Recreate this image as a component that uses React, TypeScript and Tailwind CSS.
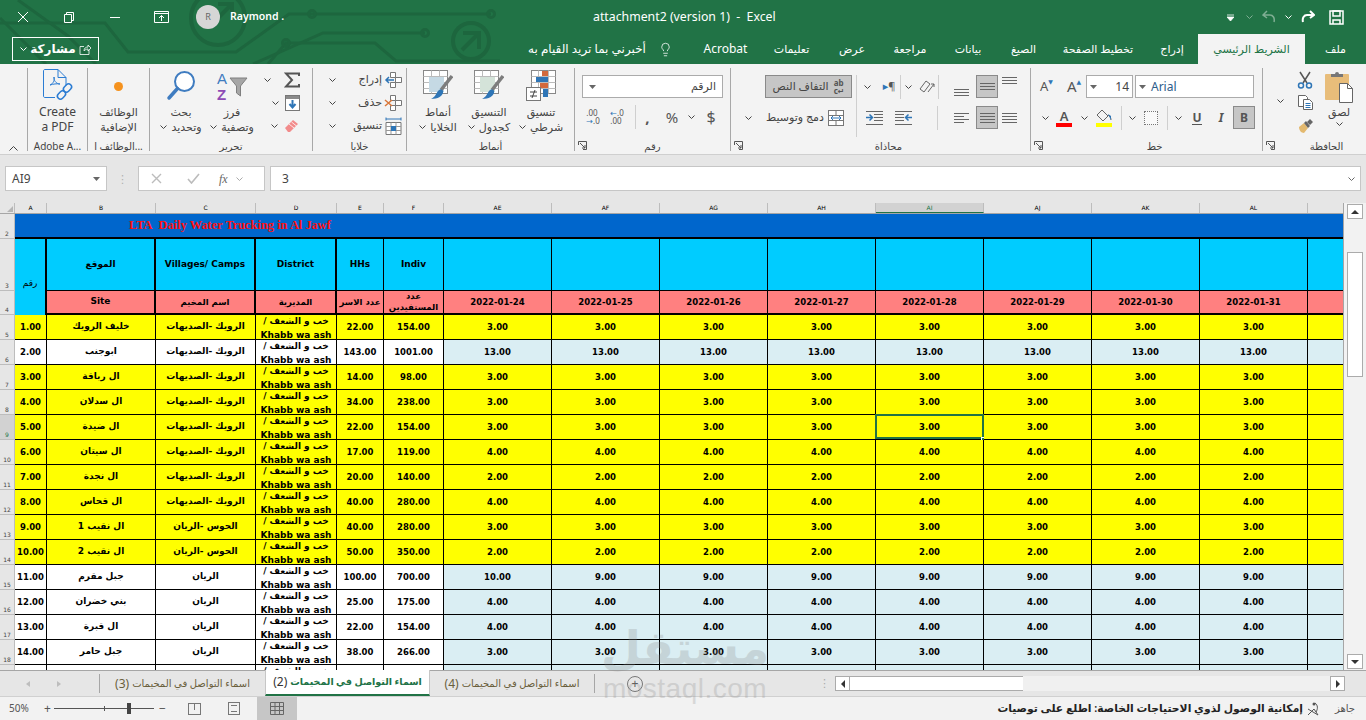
import React from 'react';
import clsx from 'clsx';
import { Lightbulb } from 'lucide-react';

const COLS = 'grid grid-cols-[15px_32px_109px_100px_81px_47px_60px_repeat(8,108px)_36px]';

const Chevron = ({ color = '#444' }: { color?: string }) => (
  <svg width="7" height="4" viewBox="0 0 7 4" className="shrink-0">
    <path d="M.5.5l3 3 3-3" stroke={color} fill="none" />
  </svg>
);

const Caret = () => (
  <svg width="7" height="4" viewBox="0 0 7 4" className="shrink-0">
    <path d="M0 0h7L3.5 4z" fill="#666" />
  </svg>
);

const Launcher = () => (
  <svg width="9" height="9" viewBox="0 0 9 9" className="absolute bottom-[1px] left-[3px]">
    <path d="M.5 4V.5h8v8H5M2 2l5 5M7 4v3H4" stroke="#555" fill="none" />
  </svg>
);

const Slot = ({ w, className, children }: { w: string; className?: string; children?: React.ReactNode }) => (
  <div className={clsx('flex shrink-0 items-center justify-center', w, className)}>{children}</div>
);

const Sep = () => <div className="h-[24px] w-px shrink-0 bg-[#cfcfcf]" />;

function Group({ w, label, launcher, labelClass, children }: { w: string; label: string; launcher?: boolean; labelClass?: string; children?: React.ReactNode }) {
  return (
    <div className={clsx('relative flex shrink-0 flex-col border-l border-[#a8a8a8]', w)}>
      <div className="flex min-h-0 flex-1">{children}</div>
      <div className={clsx('h-[14px] whitespace-nowrap text-center text-[10px] leading-[19px] text-[#444]', labelClass)}>{label}</div>
      {launcher && <Launcher />}
    </div>
  );
}

function BigButton({ w, icon, top, bottom, chevron, latin }: { w: string; icon: React.ReactNode; top: string; bottom: string; chevron?: boolean; latin?: boolean }) {
  const textSize = latin ? 'text-[12px]' : 'text-[11px]';
  return (
    <div className={clsx('flex shrink-0 flex-col items-center', w)}>
      <div className="flex h-[36px] items-center justify-center">{icon}</div>
      <div className={clsx('whitespace-nowrap leading-[15px] text-[#444]', textSize)}>{top}</div>
      <div className={clsx('flex items-center gap-1 whitespace-nowrap leading-[15px] text-[#444]', textSize)}>
        {chevron && <Chevron />}
        <span>{bottom}</span>
      </div>
    </div>
  );
}

const PdfIcon = () => (
  <svg width="32" height="36" viewBox="0 0 32 36" fill="none">
    <path d="M3 1.500h13l8 8v8M3 1.500c-1 0-1.500.5-1.500 1.500v25c0 1 .5 1.500 1.500 1.500h10M16 1.500v8h8" stroke="#2b7cd3" />
    <path d="M8 17c3-1 5-5 4-8-.5 3 2 7 6 7-3-.5-7 0-10 1z" stroke="#2b7cd3" />
    <g stroke="#2b7cd3" strokeWidth="1.500">
      <rect x="15" y="24" width="9" height="6" rx="3" transform="rotate(-45 19.500 27)" />
      <rect x="21" y="17" width="9" height="6" rx="3" transform="rotate(-45 25.500 20)" />
    </g>
  </svg>
);

const Magnifier = () => (
  <svg width="30" height="32" viewBox="0 0 30 32" fill="none">
    <circle cx="18.500" cy="11.500" r="9.500" stroke="#3f7cc0" strokeWidth="2" fill="#fff" />
    <path d="M11.500 18.500L3 28" stroke="#3f7cc0" strokeWidth="3.500" strokeLinecap="round" />
  </svg>
);

const SortFilter = () => (
  <svg width="32" height="32" viewBox="0 0 32 32">
    <text x="1" y="14" fontSize="15" fontFamily="Liberation Sans" fill="#3f7cc0">A</text>
    <text x="1" y="30" fontSize="15" fontFamily="Liberation Sans" fontWeight="700" fill="#8e4bb5">Z</text>
    <path d="M14 8h17l-6.500 8v10l-4-3v-7z" fill="#a6a6a6" stroke="#7f7f7f" />
  </svg>
);

const Sigma = () => (
  <svg width="16" height="16" viewBox="0 0 16 16" fill="none">
    <path d="M15 4V1.500H2L8 8l-6 6.500h13V12" stroke="#555" strokeWidth="2" />
  </svg>
);

const FillDown = () => (
  <svg width="15" height="16" viewBox="0 0 15 16">
    <rect x=".5" y=".5" width="14" height="15" fill="#fff" stroke="#777" />
    <rect x="1" y="1" width="13" height="3" fill="#8a8a8a" />
    <path d="M7.500 5v7M4.500 9l3 3.500 3-3.500" stroke="#2e75b6" strokeWidth="2" fill="none" />
  </svg>
);

const Eraser = () => (
  <svg width="15" height="14" viewBox="0 0 15 14">
    <path d="M1 9l8-8 5 4-8 8H4z" fill="#f28b8b" />
    <path d="M5 5l5 4M7.500 3l5 4" stroke="#fff" strokeWidth=".8" />
  </svg>
);

function CellGridIcon({ mark }: { mark: 'insert' | 'delete' | 'format' }) {
  return (
    <svg width="20" height="18" viewBox="0 0 20 18" fill="none">
      {mark !== 'format' && <path d="M7.500 1.500h5v5h-5zM7.500 11.500h5v5h-5zM12.500 6.500h6v5h-6z" stroke="#777" fill="#fff" />}
      {mark === 'insert' && <path d="M11 9H3M6 6L3 9l3 3" stroke="#2e75b6" strokeWidth="1.500" />}
      {mark === 'delete' && <path d="M2 6l7 6M9 6l-7 6" stroke="#d9773a" strokeWidth="1.500" />}
      {mark === 'format' && (
        <>
          <path d="M3 5.500h15v12H3z" stroke="#777" fill="#fff" />
          <path d="M3 9.500h15M3 13.500h15M8 5.500v12M13 5.500v12" stroke="#999" />
          <rect x="8" y="9" width="5" height="5" fill="#2e75b6" />
          <path d="M3 2h15M3 .5v3M18 .5v3" stroke="#2e75b6" />
        </>
      )}
    </svg>
  );
}

const CondFormat = () => (
  <svg width="30" height="33" viewBox="0 0 30 33">
    <rect x="5.500" y=".5" width="24" height="23" fill="#fff" stroke="#888" />
    <path d="M5.500 6.500h24M5.500 12.500h24M5.500 18.500h24M12.500 .5v23M22.500 .5v23" stroke="#bbb" />
    <rect x="16" y="1" width="6" height="5" fill="#d2693c" />
    <rect x="10" y="7" width="12" height="5" fill="#2e75b6" />
    <rect x="14" y="13" width="8" height="5" fill="#d2693c" />
    <rect x="17" y="19" width="5" height="8" fill="#2e75b6" />
    <rect x=".5" y="17.500" width="14" height="13" fill="#fff" stroke="#777" />
    <path d="M4 22h7M4 26h7M9 20l-3 8" stroke="#444" />
  </svg>
);

function TableBrush({ fill }: { fill: string }) {
  return (
    <svg width="30" height="33" viewBox="0 0 30 33">
      <rect x=".5" y=".5" width="24" height="23" fill="#fff" stroke="#888" />
      <path d="M.5 6.500h24M.5 12.500h24M.5 18.500h24M8.500 .5v23M16.500 .5v23" stroke="#bbb" />
      <rect x="6" y="7" width="15" height="15" fill={fill} />
      <path d="M29 6L18 20" stroke="#7d7d7d" strokeWidth="3.500" />
      <path d="M15 21c3-3 6-1 5 2-1 3-5 6-12 6 4-2 5-5 7-8z" fill="#2e75b6" />
    </svg>
  );
}

function AlignLines({ widths }: { widths: ('long' | 'short')[] }) {
  return (
    <div className="flex w-[15px] flex-col gap-[2px]">
      {widths.map((k, i) => (
        <div key={i} className={clsx('h-px bg-[#666]', k === 'long' ? 'w-[15px]' : 'w-[10px]')} />
      ))}
    </div>
  );
}

const IndentIcon = ({ flip }: { flip?: boolean }) => (
  <svg width="17" height="14" viewBox="0 0 17 14" className={flip ? '-scale-x-100' : ''}>
    <path d="M0 .5h17M8 3.500h9M8 6.500h9M8 9.500h9M0 13.500h17" stroke="#666" />
    <path d="M0 6.500h6M3.500 3.500l3 3-3 3" stroke="#2e75b6" strokeWidth="1.500" fill="none" />
  </svg>
);

const MergeIcon = () => (
  <svg width="16" height="16" viewBox="0 0 16 16">
    <rect x=".5" y=".5" width="15" height="15" fill="#fff" stroke="#777" />
    <path d="M.5 5.500h15M.5 10.500h15M8 .5v5M8 10.500v5" stroke="#777" />
    <path d="M3 8h10M5 6L3 8l2 2M11 6l2 2-2 2" stroke="#2e75b6" fill="none" />
  </svg>
);

const Scissors = () => (
  <svg width="16" height="18" viewBox="0 0 16 18" fill="none">
    <path d="M3 1l7 11M13 1L6 12" stroke="#555" strokeWidth="1.500" />
    <circle cx="4" cy="14.500" r="2.500" stroke="#2e75b6" strokeWidth="1.500" />
    <circle cx="12" cy="14.500" r="2.500" stroke="#2e75b6" strokeWidth="1.500" />
  </svg>
);

const CopyIcon = () => (
  <svg width="15" height="15" viewBox="0 0 15 15">
    <path d="M.5.5h7l2 2v9H.5z" fill="#fff" stroke="#666" />
    <path d="M5.500 4.500h6l3 3v7h-9z" fill="#fff" stroke="#666" />
    <path d="M7.500 8.500h5M7.500 10.500h5M7.500 12.500h5" stroke="#2e75b6" />
  </svg>
);

const Painter = () => (
  <svg width="15" height="14" viewBox="0 0 15 14">
    <path d="M1 8l5-4 4 5-4 5c-3 0-5-3-5-6z" fill="#e3b96f" />
    <path d="M6 4l4 5 2-2-4-5zM9 3l3-3 3 3-3 3z" fill="#666" />
  </svg>
);

const PasteIcon = () => (
  <svg width="28" height="32" viewBox="0 0 28 32">
    <rect x="0" y="3" width="24" height="26" rx="1" fill="#e8bd7a" />
    <path d="M6 6V3h4a2 2 0 014 0h4v3z" fill="#777" />
    <path d="M14.500 12.500h8l5 5v14h-13z" fill="#fff" stroke="#666" />
    <path d="M22.500 12.500v5h5" fill="none" stroke="#666" />
  </svg>
);

const CircuitBackdrop = () => (
  <svg width="560" height="64" viewBox="0 0 560 64" className="pointer-events-none absolute left-0 top-0" fill="none" stroke="#1d663e" strokeWidth="3">
    <path d="M0 23h105l23 29h108l53-38h202" />
    <path d="M253 64l70-31h102" />
    <path d="M268 64l18-21h89l21 18h104" />
    <path d="M18 0l50 36 28 28M0 18l46 46" />
    <circle cx="312" cy="14" r="3.500" />
    <circle cx="491" cy="14" r="3.500" />
    <circle cx="425" cy="33" r="3.500" />
    <circle cx="286" cy="43" r="3.500" />
    <circle cx="218" cy="18" r="27" strokeWidth="4" />
    <path d="M218 4h14v14M232 4l-22 22" strokeWidth="4" />
    <circle cx="471" cy="41" r="18" strokeWidth="4" />
    <path d="M463 33h16v16M479 33l-17 17" strokeWidth="4" />
  </svg>
);

function TitleBar() {
  return (
    <div className="relative flex h-[34px] items-center text-white">
      <Slot w="w-[46px]">
        <svg width="12" height="12" viewBox="0 0 12 12"><path d="M1 1l10 10M11 1L1 11" stroke="#fff" /></svg>
      </Slot>
      <Slot w="w-[46px]">
        <svg width="10" height="11" viewBox="0 0 10 11" fill="none"><path d="M2.500 2.500V.5h7v8H7.500M.5 2.500h7v8h-7z" stroke="#fff" /></svg>
      </Slot>
      <Slot w="w-[46px]"><div className="h-px w-[10px] bg-white" /></Slot>
      <Slot w="w-[46px]">
        <svg width="15" height="12" viewBox="0 0 15 12" fill="none"><path d="M.5.5h14v11H.5zM.5 2.500h14M7.500 10V4.500M5 7l2.500-2.500L10 7" stroke="#fff" /></svg>
      </Slot>
      <div className="z-10 ml-[12px] flex h-[24px] w-[24px] items-center justify-center rounded-full bg-[#d6d6d6] text-[9px] text-[#666]">R</div>
      <span className="z-10 ml-[10px] text-[10.5px] font-semibold">Raymond .</span>
      <span className="absolute left-[593px] whitespace-pre text-[12.3px]">attachment2 (version 1)  -  Excel</span>
      <div className="ml-auto flex items-center pr-[22px]">
        <svg width="7" height="7" viewBox="0 0 7 7" className="mr-[12px]"><path d="M0 1h7M0 3h7L3.500 7z" stroke="#fff" strokeWidth=".8" fill="#fff" /></svg>
        <div className="mr-[9px]"><Chevron color="#7fae93" /></div>
        <svg width="14" height="14" viewBox="0 0 14 14" fill="none" className="mr-[9px]"><path d="M5 1L1 5l4 3M1 5h7c3 0 5 3 4 7" stroke="#7fae93" strokeWidth="1.500" /></svg>
        <div className="mr-[9px]"><Chevron color="#fff" /></div>
        <svg width="14" height="14" viewBox="0 0 14 14" fill="none" className="mr-[14px]"><path d="M9 1l4 4-4 3M13 5H6C3 5 1 8 2 12" stroke="#fff" strokeWidth="2" /></svg>
        <svg width="15" height="15" viewBox="0 0 15 15" fill="none"><path d="M1 1h13v13H1z" stroke="#fff" strokeWidth="1.500" /><path d="M4 1h7v5H4zM4 14v-4h7v4" stroke="#fff" strokeWidth="1.500" /></svg>
      </div>
    </div>
  );
}

const TABS: { label: string; w: string; active?: boolean }[] = [
  { label: 'Acrobat', w: 'w-[69px] text-[12px]' },
  { label: 'تعليمات', w: 'w-[63px] text-[11px]' },
  { label: 'عرض', w: 'w-[58px] text-[11px]' },
  { label: 'مراجعة', w: 'w-[58px] text-[11px]' },
  { label: 'بيانات', w: 'w-[58px] text-[11px]' },
  { label: 'الصيغ', w: 'w-[53px] text-[11px]' },
  { label: 'تخطيط الصفحة', w: 'w-[96px] text-[11px]' },
  { label: 'إدراج', w: 'w-[52px] text-[11px]' },
  { label: 'الشريط الرئيسي', w: 'w-[107px] text-[11px]', active: true },
  { label: 'ملف', w: 'w-[61px] text-[11px]' },
];

function TabRow() {
  return (
    <div className="relative flex h-[30px] items-stretch text-white">
      <div className="z-10 mb-[3px] ml-[12px] mt-[3px] flex w-[87px] items-center justify-center gap-[3px] border border-white">
        <Chevron color="#fff" />
        <span className="text-[12px] font-bold leading-none">مشاركة</span>
        <svg width="12" height="12" viewBox="0 0 12 12" fill="none"><path d="M5 3.500H1v8h9V7M5 8c0-3 2-4 4-4V2l3 3-3 3V6c-2 0-3 1-4 2z" stroke="#fff" strokeWidth=".8" /></svg>
      </div>
      <div className="ml-[429px] flex w-[150px] items-center gap-[12px]">
        <span className="whitespace-nowrap text-[12px]">أخبرني بما تريد القيام به</span>
        <Lightbulb size={15} strokeWidth={1.25} className="shrink-0" />
      </div>
      <div className="ml-auto flex items-stretch">
        {TABS.map((t) => (
          <div
            key={t.label}
            className={clsx(
              'flex shrink-0 items-center justify-center whitespace-nowrap',
              t.w,
              t.active && 'bg-[#f3f3f3] text-[#217346]'
            )}
          >
            {t.label}
          </div>
        ))}
      </div>
    </div>
  );
}

function Ribbon() {
  return (
    <div className="flex h-[91px] items-stretch border-b border-[#cfcfcf] bg-[#f3f3f3] pb-[3px] pt-[4px]">
      <div className="flex w-[27px] shrink-0 items-end justify-center">
        <svg width="9" height="5" viewBox="0 0 9 5"><path d="M.5 4.500l4-4 4 4" stroke="#444" fill="none" /></svg>
      </div>

      <Group w="w-[60px]" label="Adobe A...">
        <BigButton w="w-full" icon={<PdfIcon />} top="Create" bottom="a PDF" latin />
      </Group>

      <Group w="w-[62px]" label="الوظائف ا...">
        <BigButton w="w-full" icon={<div className="h-[9px] w-[9px] rounded-full bg-[#f5921e]" />} top="الوظائف" bottom="الإضافية" />
      </Group>

      <Group w="w-[163px]" label="تحرير">
        <BigButton w="w-[62px]" icon={<Magnifier />} top="بحث" bottom="وتحديد" chevron />
        <BigButton w="w-[40px]" icon={<SortFilter />} top="فرز" bottom="وتصفية" chevron />
        <div className="flex flex-1 flex-col pr-[12px]">
          <div className="flex h-[23px] items-center justify-end gap-[13px]"><Chevron /><Sigma /></div>
          <div className="flex h-[23px] items-center justify-end gap-[6px]"><Chevron /><FillDown /></div>
          <div className="flex h-[23px] items-center justify-end gap-[6px] pr-[1px]"><Chevron /><Eraser /></div>
        </div>
      </Group>

      <Group w="w-[94px]" label="خلايا">
        <div className="flex w-full flex-col pl-[16px] pr-[3px] text-[11px] text-[#444]">
          <div className="flex h-[23px] items-center justify-between"><Chevron /><div className="flex items-center gap-[1px]"><span>إدراج</span><CellGridIcon mark="insert" /></div></div>
          <div className="flex h-[23px] items-center justify-between"><Chevron /><div className="flex items-center gap-[1px]"><span>حذف</span><CellGridIcon mark="delete" /></div></div>
          <div className="flex h-[23px] items-center justify-between"><Chevron /><div className="flex items-center gap-[1px]"><span>تنسيق</span><CellGridIcon mark="format" /></div></div>
        </div>
      </Group>

      <Group w="w-[168px]" label="أنماط">
        <div className="flex pl-[2px]">
          <BigButton w="w-[58px]" icon={<TableBrush fill="#c5d9e4" />} top="أنماط" bottom="الخلايا" chevron />
          <BigButton w="w-[44px]" icon={<TableBrush fill="#d4e3d9" />} top="التنسيق" bottom="كجدول" chevron />
          <BigButton w="w-[60px]" icon={<CondFormat />} top="تنسيق" bottom="شرطي" chevron />
        </div>
      </Group>

      <Group w="w-[156px]" label="رقم" launcher>
        <div className="flex w-full flex-col pl-[7px] pr-[7px] pt-[7px]">
          <div className="flex h-[23px] items-center justify-between border border-[#ababab] bg-white px-[6px]">
            <Caret />
            <span className="text-[11px] text-[#444]">الرقم</span>
          </div>
          <div className="mt-[7px] flex h-[24px] items-center text-[#555]">
            <Slot w="w-[22px]"><span className="text-[8px] leading-[8px] text-[#555]">.00<br /><span className="text-[#2e75b6]">→</span>.0</span></Slot>
            <Slot w="w-[26px]"><span className="text-[8px] leading-[8px] text-[#555]"><span className="text-[#2e75b6]">←</span>.0<br />.00</span></Slot>
            <Slot w="w-[10px]"><Sep /></Slot>
            <Slot w="w-[15px]"><span className="text-[15px] font-bold leading-none">,</span></Slot>
            <Slot w="w-[34px]"><span className="text-[15px]">%</span></Slot>
            <Slot w="w-[4px]"><Chevron /></Slot>
            <Slot w="w-[36px]"><span className="text-[16px]">$</span></Slot>
          </div>
        </div>
      </Group>

      <Group w="w-[300px]" label="محاذاة" launcher labelClass="pl-[16px]">
        <div className="flex w-full pt-[7px]">
          <div className="flex w-[126px] shrink-0 flex-col border-r border-[#cfcfcf] pb-[7px] pl-[14px]">
            <div className="ml-[20px] flex h-[23px] w-[87px] items-center justify-center gap-[5px] border border-[#8a8a8a] bg-[#c6c6c6] text-[11px] text-[#444]">
              <span>التفاف النص</span>
              <span className="text-[8px] font-bold leading-[8px] text-[#555]">ab<br />c↵</span>
            </div>
            <div className="mt-[8px] flex h-[23px] items-center gap-[14px] text-[11px] text-[#444]">
              <Chevron />
              <div className="flex items-center gap-[4px]"><span>دمج وتوسيط</span><MergeIcon /></div>
            </div>
          </div>
          <div className="flex w-[90px] shrink-0 flex-col">
            <div className="flex h-[23px] items-center">
              <Slot w="w-[21px]"><Chevron /></Slot>
              <Slot w="w-[22px]"><span className="text-[11px] text-[#555]"><span className="text-[#2e75b6]">▸</span>¶</span></Slot>
              <Sep />
              <Slot w="w-[15px]"><Chevron /></Slot>
              <Slot w="w-[22px]">
                <svg width="16" height="14" viewBox="0 0 16 14" fill="none"><path d="M1 9l6-8 4 3-6 8zM9 12l6-8M15 4h-3M15 4v3" stroke="#666" /></svg>
              </Slot>
              <Sep />
            </div>
            <div className="mt-[8px] flex h-[23px] items-center">
              <Slot w="w-[34px]"><IndentIcon /></Slot>
              <Slot w="w-[25px]"><IndentIcon flip /></Slot>
              <Slot w="w-[21px]" />
              <Sep />
            </div>
          </div>
          <div className="flex flex-col">
            <div className="flex h-[23px] items-center">
              <Slot w="w-[29px]" className="h-full items-end pb-[2px]"><AlignLines widths={['long', 'long', 'long']} /></Slot>
              <Slot w="w-[22px]" className="h-full border border-[#8a8a8a] bg-[#c6c6c6]"><AlignLines widths={['long', 'long', 'long']} /></Slot>
              <Slot w="w-[22px]" className="h-full items-start pt-[2px]"><AlignLines widths={['long', 'long', 'long']} /></Slot>
            </div>
            <div className="mt-[8px] flex h-[23px] items-center">
              <Slot w="w-[29px]"><AlignLines widths={['long', 'short', 'long', 'short']} /></Slot>
              <Slot w="w-[22px]" className="h-full border border-[#8a8a8a] bg-[#c6c6c6]"><AlignLines widths={['long', 'long', 'long', 'long']} /></Slot>
              <Slot w="w-[22px]"><AlignLines widths={['long', 'long', 'long', 'long']} /></Slot>
            </div>
          </div>
        </div>
      </Group>

      <Group w="w-[232px]" label="خط" launcher labelClass="pl-[16px]">
        <div className="flex w-full flex-col pt-[7px]">
          <div className="flex h-[23px] items-center">
            <Slot w="w-[31px]" className="text-[13px] text-[#555]">A<span className="mb-[8px] text-[6px] text-[#2e75b6]">▼</span></Slot>
            <Slot w="w-[24px]" className="text-[15px] text-[#555]">A<span className="mb-[8px] text-[6px] text-[#2e75b6]">▲</span></Slot>
            <div className="flex h-full w-[47px] items-center justify-between border border-[#ababab] bg-white px-[3px]">
              <Caret />
              <span className="text-[12px] text-[#444]">14</span>
            </div>
            <div className="ml-[2px] flex h-full w-[119px] items-center gap-[5px] border border-[#ababab] bg-white px-[3px]">
              <Caret />
              <span className="text-[12px] text-[#2e5d8a]">Arial</span>
            </div>
          </div>
          <div className="mt-[8px] flex h-[23px] items-center text-[#555]">
            <Slot w="w-[12px]" className="ml-[8px]"><Chevron /></Slot>
            <Slot w="w-[26px]" className="flex-col"><span className="text-[13px] font-semibold leading-[14px]">A</span><div className="h-[4px] w-[16px] bg-[#ff0000]" /></Slot>
            <Slot w="w-[14px]"><Chevron /></Slot>
            <Slot w="w-[26px]" className="flex-col">
              <svg width="16" height="14" viewBox="0 0 16 14" fill="none"><path d="M6 1l6 6-5 5-6-6zM12 6c2 1 3 3 3 5" stroke="#666" /><path d="M12 5l3 2v4z" fill="#2e75b6" /></svg>
              <div className="h-[4px] w-[16px] bg-[#ffff00]" />
            </Slot>
            <Slot w="w-[8px]"><Sep /></Slot>
            <Slot w="w-[14px]"><Chevron /></Slot>
            <Slot w="w-[24px]"><div className="h-[14px] w-[14px] border border-dotted border-[#777] bg-[#f9f9f9]" /></Slot>
            <Slot w="w-[8px]"><Sep /></Slot>
            <Slot w="w-[14px]"><Chevron /></Slot>
            <Slot w="w-[24px]"><span className="border-b border-[#555] text-[12px] font-bold leading-[13px]">U</span></Slot>
            <Slot w="w-[24px]"><span className="text-[12px] font-bold italic">I</span></Slot>
            <Slot w="w-[22px]" className="h-full border border-[#8a8a8a] bg-[#c6c6c6]"><span className="text-[12px] font-bold">B</span></Slot>
          </div>
        </div>
      </Group>

      <Group w="w-[104px]" label="الحافظة" launcher labelClass="pl-[24px]">
        <div className="flex w-full">
          <div className="flex h-full w-[33px] items-center justify-end pb-[4px] pr-[12px]"><Chevron /></div>
          <div className="flex w-[18px] flex-col items-center">
            <Slot w="w-full" className="h-[23px]"><Scissors /></Slot>
            <Slot w="w-full" className="h-[23px]"><CopyIcon /></Slot>
            <Slot w="w-full" className="h-[23px]"><Painter /></Slot>
          </div>
          <div className="ml-[11px] flex flex-col items-center pt-[3px]">
            <PasteIcon />
            <span className="mt-[1px] text-[11px] leading-[15px] text-[#444]">لصق</span>
            <div className="mt-[3px]"><Chevron /></div>
          </div>
        </div>
      </Group>
    </div>
  );
}

function FormulaBar() {
  return (
    <div className="flex h-[48px] items-start bg-[#e6e6e6] pt-[11px]">
      <div className="ml-[5px] flex h-[25px] w-[102px] items-center justify-between border border-[#c6c6c6] bg-white px-[6px]">
        <span className="text-[12px] text-[#444]">AI9</span>
        <Caret />
      </div>
      <div className="flex h-[25px] w-[31px] items-center justify-center text-[11px] leading-none text-[#b0b0b0]">⋮</div>
      <div className="flex h-[25px] w-[127px] items-center border border-[#c6c6c6] bg-white pl-[12px] text-[#c0c0c0]">
        <svg width="11" height="11" viewBox="0 0 11 11"><path d="M1 1l9 9M10 1l-9 9" stroke="#bcbcbc" strokeWidth="1.400" /></svg>
        <svg width="13" height="11" viewBox="0 0 13 11" className="ml-[25px]"><path d="M1 6l3.500 4L12 1" stroke="#bcbcbc" strokeWidth="1.600" fill="none" /></svg>
        <span className="ml-[19px] font-['Liberation_Serif',serif] text-[12px] italic text-[#666]">fx</span>
        <div className="ml-[8px]"><Chevron color="#aaa" /></div>
      </div>
      <div className="ml-[5px] flex h-[25px] flex-1 items-center justify-between border border-[#c6c6c6] bg-white pl-[11px] pr-[5px]">
        <span className="text-[12px] text-[#444]">3</span>
        <Chevron color="#666" />
      </div>
      <div className="w-[5px] shrink-0" />
    </div>
  );
}

const COL_HEADERS = ['A', 'B', 'C', 'D', 'E', 'F', 'AE', 'AF', 'AG', 'AH', 'AI', 'AJ', 'AK', 'AL', ''];
const DATES = ['2022-01-24', '2022-01-25', '2022-01-26', '2022-01-27', '2022-01-28', '2022-01-29', '2022-01-30', '2022-01-31'];

type DataRow = { row: number; no: string; site: string; camp: string; hh: string; ind: string; vals: string[]; yellow: boolean };

const repeat8 = (v: string) => Array(8).fill(v) as string[];
const ROWAIK = 'الرويك -الصديهات';
const HAWS = 'الحوس -الريان';
const RAYAN = 'الريان';

const ROWS: DataRow[] = [
  { row: 5, no: '1.00', site: 'خليف الرويك', camp: ROWAIK, hh: '22.00', ind: '154.00', vals: repeat8('3.00'), yellow: true },
  { row: 6, no: '2.00', site: 'ابوجنب', camp: ROWAIK, hh: '143.00', ind: '1001.00', vals: repeat8('13.00'), yellow: false },
  { row: 7, no: '3.00', site: 'ال رباقة', camp: ROWAIK, hh: '14.00', ind: '98.00', vals: repeat8('3.00'), yellow: true },
  { row: 8, no: '4.00', site: 'ال سدلان', camp: ROWAIK, hh: '34.00', ind: '238.00', vals: repeat8('3.00'), yellow: true },
  { row: 9, no: '5.00', site: 'ال ضيدة', camp: ROWAIK, hh: '22.00', ind: '154.00', vals: repeat8('3.00'), yellow: true },
  { row: 10, no: '6.00', site: 'ال سيتان', camp: ROWAIK, hh: '17.00', ind: '119.00', vals: repeat8('4.00'), yellow: true },
  { row: 11, no: '7.00', site: 'ال نجدة', camp: ROWAIK, hh: '20.00', ind: '140.00', vals: repeat8('2.00'), yellow: true },
  { row: 12, no: '8.00', site: 'ال قحاس', camp: ROWAIK, hh: '40.00', ind: '280.00', vals: repeat8('4.00'), yellow: true },
  { row: 13, no: '9.00', site: 'ال نقيب 1', camp: HAWS, hh: '40.00', ind: '280.00', vals: repeat8('3.00'), yellow: true },
  { row: 14, no: '10.00', site: 'ال نقيب 2', camp: HAWS, hh: '50.00', ind: '350.00', vals: repeat8('2.00'), yellow: true },
  { row: 15, no: '11.00', site: 'جبل مقرم', camp: RAYAN, hh: '100.00', ind: '700.00', vals: ['10.00', ...Array(7).fill('9.00')], yellow: false },
  { row: 16, no: '12.00', site: 'بني خضران', camp: RAYAN, hh: '25.00', ind: '175.00', vals: repeat8('4.00'), yellow: false },
  { row: 17, no: '13.00', site: 'ال قبرة', camp: RAYAN, hh: '22.00', ind: '154.00', vals: repeat8('4.00'), yellow: false },
  { row: 18, no: '14.00', site: 'جبل حامر', camp: RAYAN, hh: '38.00', ind: '266.00', vals: repeat8('3.00'), yellow: false },
];

function RowHead({ n, active }: { n: number; active?: boolean }) {
  return (
    <div
      className={clsx(
        'flex items-end justify-center border-b border-r border-[#bdbdbd] pb-[1px] text-[6px] font-normal leading-none',
        active ? 'bg-[#d2d2d2] text-[#217346]' : 'bg-[#e6e6e6] text-[#444]'
      )}
    >
      {n}
    </div>
  );
}

const cellBase = 'flex items-center justify-center overflow-hidden whitespace-nowrap border-b border-r border-black text-center';

function DataRowView({ data }: { data: DataRow }) {
  const bg = data.yellow ? 'bg-[#ffff00]' : 'bg-white';
  const valBg = data.yellow ? 'bg-[#ffff00]' : 'bg-[#daeef3]';
  return (
    <div className={clsx(COLS, 'h-[25px]')}>
      <RowHead n={data.row} active={data.row === 9} />
      <div className={clsx(cellBase, bg)}>{data.no}</div>
      <div className={clsx(cellBase, bg, 'text-[9px]')}>{data.site}</div>
      <div className={clsx(cellBase, bg, 'text-[9px]')}>{data.camp}</div>
      <div className={clsx(cellBase, bg, 'flex-col pt-[2px] text-[9px] leading-[14px]')}>
        <span dir="rtl">خب و الشعف /</span>
        <span>Khabb wa ash</span>
      </div>
      <div className={clsx(cellBase, bg)}>{data.hh}</div>
      <div className={clsx(cellBase, bg)}>{data.ind}</div>
      {data.vals.map((v, i) => (
        <div key={i} className={clsx(cellBase, valBg, 'relative !overflow-visible')}>
          {v}
          {data.row === 9 && i === 4 && (
            <>
              <div className="absolute -left-px -top-px h-[25px] w-[109px] border-2 border-[#217346]" />
              <div className="absolute -bottom-[3px] -right-[3px] h-[5px] w-[5px] border border-white bg-[#217346]" />
            </>
          )}
        </div>
      ))}
      <div className={clsx(cellBase, valBg)} />
    </div>
  );
}

function Sheet() {
  return (
    <div className="flex h-[467px] bg-[#f2f2f2]">
      <div className="w-[1344px] shrink-0 overflow-hidden border-r border-[#a6a6a6] font-['DejaVu_Sans',sans-serif] text-[8.5px] font-bold text-black">
        <div className={clsx(COLS, 'h-[11px] border-b border-[#a6a6a6] bg-[#e6e6e6] font-normal')}>
          <div className="flex items-end justify-end border-r border-[#bdbdbd] pb-[1px] pr-[1px]">
            <div className="h-0 w-0 border-b-[6px] border-l-[6px] border-b-[#b5b5b5] border-l-transparent" />
          </div>
          {COL_HEADERS.map((c, i) => (
            <div
              key={i}
              className={clsx(
                'flex items-center justify-center border-r border-[#bdbdbd] text-[6px] leading-none',
                c === 'AI' && 'border-b border-b-[#217346] bg-[#d2d2d2] text-[#217346]'
              )}
            >
              {c}
            </div>
          ))}
        </div>

        <div className={clsx(COLS, 'h-[25px]')}>
          <RowHead n={2} />
          <div className="col-start-2 col-end-[-1] flex items-center border-b-2 border-black bg-[#0066cc] pl-[114px] font-['Liberation_Serif',serif] text-[12.4px] text-[#ff1010]">
            LTA&nbsp; Daily Water Trucking in Al Jawf
          </div>
        </div>

        <div className={clsx(COLS, 'grid-rows-[52px_24px]')}>
          <RowHead n={3} />
          <div className="row-span-2 flex items-center justify-center border-r-2 border-black bg-[#00ccff] pt-[14px] text-[9px] font-normal">رقم</div>
          <div className={clsx(cellBase, 'border-r-2 bg-[#00ccff] text-[9px]')}>الموقع</div>
          <div className={clsx(cellBase, 'border-r-2 bg-[#00ccff] text-[9px]')}>Villages/ Camps</div>
          <div className={clsx(cellBase, 'border-r-2 bg-[#00ccff] text-[9px]')}>District</div>
          <div className={clsx(cellBase, 'bg-[#00ccff] text-[9px]')}>HHs</div>
          <div className={clsx(cellBase, 'bg-[#00ccff] text-[9px]')}>Indiv</div>
          {DATES.map((d) => (
            <div key={d} className={clsx(cellBase, 'bg-[#00ccff]')} />
          ))}
          <div className={clsx(cellBase, 'bg-[#00ccff]')} />

          <RowHead n={4} />
          <div className={clsx(cellBase, 'border-b-2 border-r-2 bg-[#ff8080] text-[9px]')}>Site</div>
          <div className={clsx(cellBase, 'border-b-2 border-r-2 bg-[#ff8080]')}>اسم المخيم</div>
          <div className={clsx(cellBase, 'border-b-2 border-r-2 bg-[#ff8080]')}>المديرية</div>
          <div className={clsx(cellBase, 'border-b-2 bg-[#ff8080]')}>عدد الاسر</div>
          <div className={clsx(cellBase, 'flex-col border-b-2 bg-[#ff8080] leading-[11px]')}>
            <span>عدد</span>
            <span>المستفيدين</span>
          </div>
          {DATES.map((d) => (
            <div key={d} className={clsx(cellBase, 'border-b-2 bg-[#ff8080]')}>{d}</div>
          ))}
          <div className={clsx(cellBase, 'border-b-2 bg-[#ff8080]')} />
        </div>

        {ROWS.map((r) => (
          <DataRowView key={r.row} data={r} />
        ))}
        <DataRowView data={{ row: 19, no: '', site: '', camp: '', hh: '', ind: '', vals: repeat8(''), yellow: false }} />
      </div>

      <div className="flex flex-1 flex-col items-center py-[1px]">
        <div className="flex h-[15px] w-[16px] items-center justify-center border border-[#ababab] bg-white">
          <div className="h-0 w-0 border-x-[4px] border-b-[4px] border-x-transparent border-b-[#333]" />
        </div>
        <div className="mt-[33px] h-[125px] w-[16px] border border-[#ababab] bg-white" />
        <div className="flex-1" />
        <div className="flex h-[15px] w-[16px] items-center justify-center border border-[#ababab] bg-white">
          <div className="h-0 w-0 border-x-[4px] border-t-[4px] border-x-transparent border-t-[#333]" />
        </div>
      </div>
    </div>
  );
}

function SheetTab({ name, num, w, active }: { name: string; num: string; w: string; active?: boolean }) {
  return (
    <div
      dir="rtl"
      className={clsx(
        'flex shrink-0 items-center justify-center gap-[3px] whitespace-nowrap',
        w,
        active
          ? '-mt-px border-x border-b-2 border-[#217346] border-x-[#c6c6c6] bg-white text-[9.5px] font-bold text-[#217346]'
          : 'text-[10px] text-[#6a5f3c]'
      )}
    >
      <span>{name}</span>
      <span className={clsx('text-[12px]', active && 'font-normal text-[#333]')}>{num}</span>
    </div>
  );
}

function SheetTabs() {
  return (
    <div className="flex h-[26px] items-stretch border-t border-[#a6a6a6] bg-[#e6e6e6]">
      <div className="my-[3px] flex w-[100px] shrink-0 items-center border-r border-[#a6a6a6] pl-[26px] text-[#b5b5b5]">
        <div className="h-0 w-0 border-y-[3px] border-r-[4px] border-y-transparent border-r-[#bdbdbd]" />
        <div className="ml-[27px] h-0 w-0 border-y-[3px] border-l-[4px] border-y-transparent border-l-[#bdbdbd]" />
      </div>
      <SheetTab name="اسماء التواصل في المخيمات" num="(3)" w="w-[165px]" />
      <SheetTab name="اسماء التواصل في المخيمات" num="(2)" w="w-[165px]" active />
      <SheetTab name="اسماء التواصل في المخيمات" num="(4)" w="w-[164px]" />
      <div className="my-[3px] w-px bg-[#a6a6a6]" />
      <div className="ml-[32px] flex w-[16px] items-center">
        <div className="flex h-[16px] w-[16px] items-center justify-center rounded-full border border-[#777] text-[12px] leading-none text-[#555]">+</div>
      </div>
      <div className="ml-[176px] flex w-[16px] items-center text-[11px] text-[#aaa]">⋮</div>
      <div className="flex items-center">
        <div className="flex h-[15px] w-[15px] items-center justify-center border border-[#ababab] bg-white">
          <div className="h-0 w-0 border-y-[4px] border-r-[4px] border-y-transparent border-r-[#333]" />
        </div>
        <div className="h-[15px] w-[173px] border-y border-[#ababab] bg-white" />
        <div className="h-[15px] w-[307px] bg-[#f0f0f0]" />
        <div className="flex h-[15px] w-[15px] items-center justify-center border border-[#ababab] bg-white">
          <div className="h-0 w-0 border-y-[4px] border-l-[4px] border-y-transparent border-l-[#333]" />
        </div>
      </div>
    </div>
  );
}

function StatusBar() {
  return (
    <div className="flex h-[24px] items-center border-t border-[#d0d0d0] bg-[#f2f2f2] text-[#555]">
      <span className="ml-[9px] w-[30px] text-[10px]">50%</span>
      <span className="ml-[5px] text-[12px] leading-none">+</span>
      <div className="relative ml-[3px] h-px w-[100px] bg-[#555]">
        <div className="absolute left-[50px] top-[-2px] h-[5px] w-px bg-[#555]" />
        <div className="absolute left-[73px] top-[-5px] h-[11px] w-[4px] bg-[#444]" />
      </div>
      <span className="ml-[5px] text-[12px] leading-none">−</span>
      <div className="ml-[22px] h-[12px] w-[13px] border border-[#777]">
        <div className="ml-[5px] h-[6px] w-[1px] bg-[#777]" />
      </div>
      <div className="ml-[27px] h-[13px] w-[12px] border border-[#777] p-[2px]">
        <div className="h-full w-full border-y border-[#777]" />
      </div>
      <div className="ml-[17px] flex h-full w-[40px] items-center justify-center bg-[#c6c6c6]">
        <svg width="14" height="13" viewBox="0 0 14 13"><path d="M.5.500h13v12H.5zM.5 4.500h13M.5 8.500h13M5 .5v12M9.500 .5v12" stroke="#666" fill="none" /></svg>
      </div>
      <div className="ml-auto flex items-center pr-[11px]">
        <span className="whitespace-nowrap text-[10.75px] font-semibold text-[#222]">إمكانية الوصول لذوي الاحتياجات الخاصة: اطلع على توصيات</span>
        <svg width="14" height="14" viewBox="0 0 14 14" fill="none" className="ml-[3px]">
          <circle cx="8" cy="2" r="1.500" fill="#555" />
          <path d="M2 13l6-6 4 6M2 7l10 6M9 1c3 2 3 6 1 9" stroke="#555" />
        </svg>
        <span className="ml-[15px] text-[10px] text-[#555]">جاهز</span>
      </div>
    </div>
  );
}

export default function App() {
  return (
    <div className="relative flex h-[720px] w-[1366px] flex-col overflow-hidden bg-[#f2f2f2] font-['Noto_Sans','DejaVu_Sans',sans-serif]">
      <div className="relative bg-[#217346]">
        <CircuitBackdrop />
        <TitleBar />
        <TabRow />
      </div>
      <Ribbon />
      <FormulaBar />
      <Sheet />
      <SheetTabs />
      <StatusBar />

      {/* mostaql watermark sits over the sheet */}
      <div className="pointer-events-none absolute left-[600px] top-[620px] flex w-[170px] flex-col items-center text-[#8a8a8a] opacity-25">
        <span className="font-['DejaVu_Sans',sans-serif] text-[46px] font-bold leading-[56px]">مستقل</span>
        <span className="font-['Liberation_Sans',sans-serif] text-[28px] leading-[26px] tracking-[.5px]">mostaql.com</span>
      </div>
    </div>
  );
}
